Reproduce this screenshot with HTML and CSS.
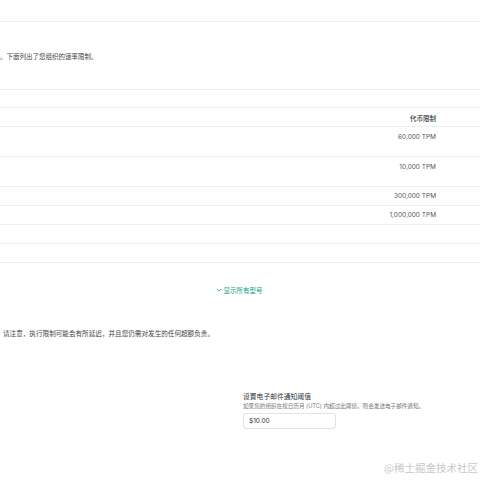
FILE: index.html
```html
<!DOCTYPE html>
<html lang="zh">
<head>
<meta charset="utf-8">
<link rel="stylesheet" href="styles.css">
</head>
<body>
<div class="page">
  <div class="top-gap"></div>
  <div class="rule"></div>
  <p class="intro">。下面列出了您组织的速率限制。</p>
  <div class="rule"></div>
  <div class="table">
    <div class="row r-empty"></div>
    <div class="row r-head"><span class="cell">代币限制</span></div>
    <div class="row r-tall"><span class="cell">60,000 TPM</span></div>
    <div class="row r-tall"><span class="cell">10,000 TPM</span></div>
    <div class="row r-mid"><span class="cell">300,000 TPM</span></div>
    <div class="row r-mid"><span class="cell">1,000,000 TPM</span></div>
    <div class="row r-mid"></div>
    <div class="row r-mid"></div>
  </div>
  <div class="show-all">
    <svg class="chev" viewBox="0 0 8 8" width="6" height="6"><path d="M1 2.5 L4 5.5 L7 2.5" fill="none" stroke="#10a37f" stroke-width="1.1"/></svg>
    <span>显示所有型号</span>
  </div>
  <p class="note">请注意，执行限制可能会有所延迟，并且您仍需对发生的任何超额负责。</p>
  <div class="form">
    <div class="form-title">设置电子邮件通知阈值</div>
    <div class="form-sub">如果您的组织在按日历月 (UTC) 内超过此阈值，则会发送电子邮件通知。</div>
    <div class="input">$10.00</div>
  </div>
  <div class="watermark">@稀土掘金技术社区</div>
</div>
</body>
</html>
```
FILE: styles.css
```css
html, body {
  margin: 0;
  padding: 0;
  background: #ffffff;
}
.page {
  position: relative;
  width: 480px;
  height: 480px;
  overflow: hidden;
  font-family: "Inter", "Noto Sans CJK SC", sans-serif;
  color: #444;
}
.top-gap { height: 21px; }
.rule { height: 1px; background: #efefef; }
.intro {
  margin: 0;
  height: 67px;
  box-sizing: border-box;
  padding-top: 31px;
  font-size: 6.5px;
  line-height: 9px;
  color: #444;
}
.table { display: flex; flex-direction: column; }
.row {
  display: flex;
  justify-content: flex-end;
  padding-right: 44px;
  border-bottom: 1px solid #efefef;
  box-sizing: border-box;
  font-size: 6.5px;
  color: #555;
}
.r-empty { height: 18px; }
.r-head { height: 19px; align-items: center; }
.r-head .cell { font-weight: 500; color: #333; padding-top: 4px; }
.r-tall { height: 30px; align-items: flex-start; padding-top: 6px; }
.r-mid { height: 19px; align-items: center; }
.cell { line-height: 9px; }
.show-all {
  display: flex;
  justify-content: center;
  align-items: center;
  gap: 2px;
  margin-top: 22px;
  padding-right: 2px;
  height: 9px;
  font-size: 6.5px;
  color: #10a37f;
}
.chev { display: block; }
.note {
  margin: 36px 0 0 3px;
  font-size: 6.6px;
  line-height: 9px;
  color: #444;
}
.form {
  margin: 53px 0 0 243px;
  display: flex;
  flex-direction: column;
}
.form-title {
  font-size: 6.8px;
  line-height: 9px;
  color: #333;
}
.form-sub {
  font-size: 5.6px;
  line-height: 8px;
  margin-top: 1px;
  color: #777;
}
.input {
  margin-top: 3px;
  width: 93px;
  height: 16px;
  box-sizing: border-box;
  border: 1px solid #e3e3e3;
  border-radius: 3px;
  padding: 0 5px;
  display: flex;
  align-items: center;
  font-size: 6.5px;
  color: #333;
}
.watermark {
  position: absolute;
  right: 2px;
  top: 461px;
  font-family: "Noto Sans CJK SC", sans-serif;
  font-size: 10.5px;
  line-height: 14px;
  color: #c8c8c8;
}
```
